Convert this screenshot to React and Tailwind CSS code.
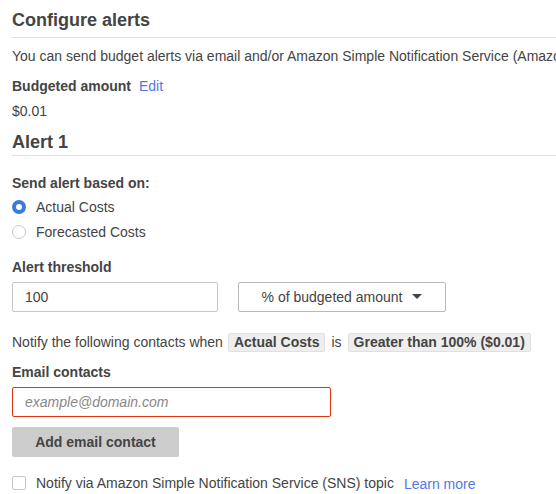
import React from 'react'
import { useState } from 'react';

const Tag = ({ children }) => (
  <span className="inline-block bg-[#eeeeee] border border-[#e0e0e0] rounded-[2px] px-[5px] leading-[17px] font-bold">
    {children}
  </span>
)

const Radio = ({ checked, label, onClick }) => (
  <label className="flex items-center h-5 cursor-pointer" onClick={onClick}>
    {checked ? (
      <span className="w-[14px] h-[14px] rounded-full bg-[#3b7ae0] flex items-center justify-center">
        <span className="w-[6px] h-[6px] rounded-full bg-white" />
      </span>
    ) : (
      <span className="w-[14px] h-[14px] rounded-full border border-[#c8c8c8] bg-white" />
    )}
    <span className="ml-[10px]">{label}</span>
  </label>
)

const App = () => {
  const [basis, setBasis] = useState("actual");
  const [threshold, setThreshold] = useState("100");
  const [email, setEmail] = useState("");
  const [sns, setSns] = useState(false);

  return (
    <div className="w-[556px] h-[494px] overflow-hidden bg-white text-[#444444] text-[14px] leading-5 whitespace-nowrap" style={{ fontFamily: '"Liberation Sans", Arial, sans-serif' }}>
      <div className="pl-3">
        <h2 className="pt-[9px] pb-[6px] text-[18px] leading-[22px] font-bold border-b border-[#e1e1e1]">Configure alerts</h2>
        <p className="mt-2">You can send budget alerts via email and/or Amazon Simple Notification Service (Amazon SNS) topic.</p>
        <div className="mt-[10px] flex">
          <span className="font-bold">Budgeted amount</span>
          <a href="#" className="ml-2 text-[#5577e6]">Edit</a>
        </div>
        <div className="mt-[5px]">$0.01</div>

        <h3 className="mt-[10px] pb-[2px] text-[18px] leading-[22px] font-bold border-b border-[#e1e1e1]">Alert 1</h3>

        <div className="mt-[17px] font-bold">Send alert based on:</div>
        <div className="mt-[4px] flex flex-col gap-[5px]">
          <Radio checked={basis === "actual"} label="Actual Costs" onClick={() => setBasis("actual")} />
          <Radio checked={basis === "forecast"} label="Forecasted Costs" onClick={() => setBasis("forecast")} />
        </div>

        <div className="mt-[15px] font-bold">Alert threshold</div>
        <div className="mt-[5px] flex gap-[20px]">
          <input
            type="text"
            value={threshold}
            onChange={(e) => setThreshold(e.target.value)}
            className="w-[206px] h-[30px] border border-[#c6c6c6] rounded-[2px] px-3 outline-none text-[#444444]"
          />
          <button className="w-[208px] h-[30px] border border-[#b9b9b9] rounded-[2px] flex items-center justify-center gap-[10px] text-[#444444]">
            <span>% of budgeted amount</span>
            <svg width="10" height="6" viewBox="0 0 10 6"><path d="M0 0 L10 0 L5 5 Z" fill="#444444" /></svg>
          </button>
        </div>

        <div className="mt-5 flex items-center">
          <span>Notify the following contacts when</span>
          <span className="ml-[5px]"><Tag>Actual Costs</Tag></span>
          <span className="mx-[6px]">is</span>
          <Tag>Greater than {threshold}% ($0.01)</Tag>
        </div>

        <div className="mt-[10px] font-bold">Email contacts</div>
        <input
          type="email"
          placeholder="example@domain.com"
          value={email}
          onChange={(e) => setEmail(e.target.value)}
          className="mt-[5px] block w-[319px] h-[30px] border border-[#dd3311] rounded-[2px] px-3 outline-none placeholder:italic placeholder:text-[#888888]"
        />
        <button className="mt-[10px] w-[167px] h-[30px] bg-[#cccccc] rounded-[2px] font-bold text-[#444444]">Add email contact</button>

        <div className="mt-4 flex items-center h-5">
          <span
            onClick={() => setSns(!sns)}
            className="w-[14px] h-[14px] border border-[#c6c6c6] rounded-[2px] bg-white"
          />
          <span className="ml-[10px]">Notify via Amazon Simple Notification Service (SNS) topic</span>
          <a href="#" className="ml-[10px] text-[#5577e6] relative top-[1px]">Learn more</a>
        </div>
      </div>
    </div>
  )
}

export default App
